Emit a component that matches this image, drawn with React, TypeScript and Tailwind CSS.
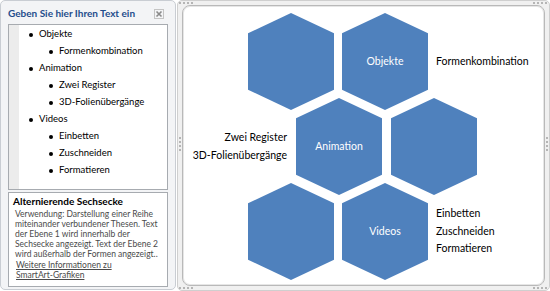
import React from 'react';

type Row = { level: 1 | 2; text: string };

const rows: Row[] = [
  { level: 1, text: 'Objekte' },
  { level: 2, text: 'Formenkombination' },
  { level: 1, text: 'Animation' },
  { level: 2, text: 'Zwei Register' },
  { level: 2, text: '3D-Folienübergänge' },
  { level: 1, text: 'Videos' },
  { level: 2, text: 'Einbetten' },
  { level: 2, text: 'Zuschneiden' },
  { level: 2, text: 'Formatieren' },
];

const hexes = [
  { left: 'left-[65px]', top: 'top-[7px]', label: '' },
  { left: 'left-[159px]', top: 'top-[7px]', label: 'Objekte' },
  { left: 'left-[113px]', top: 'top-[92px]', label: 'Animation' },
  { left: 'left-[208px]', top: 'top-[92px]', label: '' },
  { left: 'left-[65px]', top: 'top-[177px]', label: '' },
  { left: 'left-[159px]', top: 'top-[177px]', label: 'Videos' },
];

const description = [
  'Verwendung: Darstellung einer Reihe',
  'miteinander verbundener Thesen. Text',
  'der Ebene 1 wird innerhalb der',
  'Sechsecke angezeigt. Text der Ebene 2',
  'wird außerhalb der Formen angezeigt..',
];

function CloseIcon() {
  return (
    <svg width="10" height="10" viewBox="0 0 10 10" className="text-[#8a8a8a]">
      <rect x="0.5" y="0.5" width="9" height="9" fill="none" stroke="#c4c4c4" />
      <path d="M2.5 2.5 L7.5 7.5 M7.5 2.5 L2.5 7.5" stroke="currentColor" strokeWidth="1.6" />
    </svg>
  );
}

function Dots({ vertical }: { vertical?: boolean }) {
  return (
    <div className={vertical ? 'flex flex-col gap-[2px]' : 'flex gap-[2px]'}>
      {[0, 1, 2, 3].map((i) => (
        <span key={i} className="block h-[2px] w-[2px] bg-[#b5b5b5]" />
      ))}
    </div>
  );
}

export default function App() {
  return (
    <div className="flex h-[291px] w-[550px] bg-white font-['Lato',sans-serif]">
      {/* text pane */}
      <div className="flex h-[290px] w-[176px] flex-col rounded-[5px] border border-[#c9cdd3] bg-[#f3f4f6] px-[7px] pb-[2px]">
        <div className="flex h-[23px] shrink-0 items-center justify-between pr-[4px] pt-[2px]">
          <span className="text-[10px] font-bold text-[#1f4d8c]">Geben Sie hier Ihren Text ein</span>
          <CloseIcon />
        </div>
        <div className="flex h-[166px] shrink-0 border border-[#a7abb0] bg-white">
          <div className="w-[10px] bg-[#ececec]" />
          <ul className="flex flex-col pt-[1px] text-[9.5px] text-black">
            {rows.map((r, i) => (
              <li
                key={i}
                className={`flex h-[17px] items-center ${r.level === 1 ? 'pl-[10px]' : 'pl-[30px]'}`}
              >
                <span className="mr-[6px] block h-[4px] w-[4px] rounded-full bg-black" />
                {r.text}
              </li>
            ))}
          </ul>
        </div>
        <div className="mt-[2px] flex min-h-0 flex-1 flex-col overflow-hidden border border-[#a7abb0] bg-white px-[4px] pt-[1px] text-[8.5px] leading-[10px]">
          <div className="text-[10px] font-bold leading-[14px] text-black">Alternierende Sechsecke</div>
          <div className="whitespace-nowrap pl-[2px] pt-[1px] text-[#4a4a4a]">
            {description.map((l) => (
              <div key={l}>{l}</div>
            ))}
          </div>
          <div className="pl-[3px] pt-[1px] text-[#4a4a4a]">
            <div className="underline">Weitere Informationen zu</div>
            <div className="underline">SmartArt-Grafiken</div>
          </div>
        </div>
      </div>

      {/* diagram frame */}
      <div className="relative ml-[1px] flex flex-1 rounded-[5px] border border-[#cfcfcf] bg-[#f0f0f0] p-[4px]">
        <div className="absolute left-[1px] top-[1px]">
          <Dots />
        </div>
        <div className="absolute right-[2px] top-[1px]">
          <Dots />
        </div>
        <div className="absolute left-[1px] top-[136px]">
          <Dots vertical />
        </div>
        <div className="absolute right-[1px] top-[136px]">
          <Dots vertical />
        </div>
        <div className="absolute bottom-[1px] left-[1px]">
          <Dots />
        </div>
        <div className="absolute bottom-[1px] right-[2px]">
          <Dots />
        </div>
        <div className="relative flex-1 rounded-[8px] border border-[#b9b9b9] bg-white text-[10.5px] text-black shadow-[inset_0_0_0_1px_#e6e6e6]">
          {hexes.map((h, i) => (
            <div
              key={i}
              className={`absolute ${h.left} ${h.top} flex h-[97px] w-[86px] items-center justify-center bg-[#4f81bd] text-[10.5px] text-white [clip-path:polygon(50%_0,100%_21%,100%_79%,50%_100%,0_79%,0_21%)]`}
            >
              {h.label}
            </div>
          ))}
          <div className="absolute left-[253px] top-[46px] leading-[18px]">Formenkombination</div>
          <div className="absolute right-[257px] top-[122px] text-right leading-[18px]">
            Zwei Register
            <br />
            3D-Folienübergänge
          </div>
          <div className="absolute left-[253px] top-[199px] leading-[17.5px]">
            Einbetten
            <br />
            Zuschneiden
            <br />
            Formatieren
          </div>
        </div>
      </div>
    </div>
  );
}
